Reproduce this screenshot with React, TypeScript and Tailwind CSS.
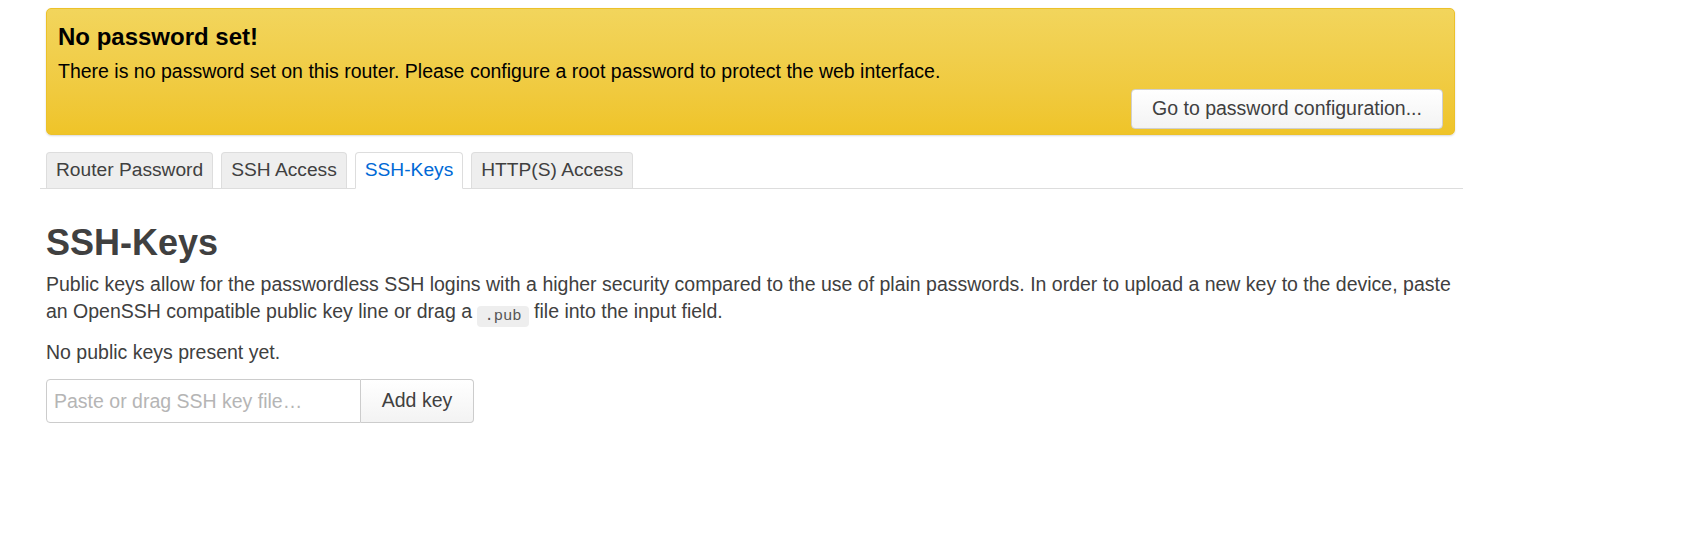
import { useState } from 'react';

const tabs = ['Router Password', 'SSH Access', 'SSH-Keys', 'HTTP(S) Access'];

export default function App() {
  const [active, setActive] = useState('SSH-Keys');
  const [key, setKey] = useState('');

  return (
    <div className="min-h-screen bg-white pt-[8px] pl-[40px] font-['Liberation_Sans',Arial,sans-serif] text-[#404040]">
      <div className="w-[1423px]">
        <div className="ml-[6px] flex h-[127px] w-[1409px] flex-col rounded-[5px] border border-[#ecc12a] bg-gradient-to-b from-[#f2d55c] to-[#efc428] px-[11px] pt-[14px] pb-[5px] text-black shadow-[0_1px_2px_rgba(0,0,0,0.15)]">
          <h4 className="text-[24px] leading-[28px] font-bold">No password set!</h4>
          <p className="mt-[7px] text-[19.5px] leading-[27px]">
            There is no password set on this router. Please configure a root password to protect the web interface.
          </p>
          <div className="mt-auto flex justify-end">
            <button className="h-[40px] w-[312px] rounded-[4px] border border-[#cfcfcf] bg-gradient-to-b from-white to-[#f3f3f3] text-[19.5px] text-[#404040]">
              Go to password configuration...
            </button>
          </div>
        </div>

        <ul className="mt-[17px] flex gap-[8px] border-b border-[#dddddd] pl-[6px]">
          {tabs.map((t) => (
            <li
              key={t}
              onClick={() => setActive(t)}
              className={
                t === active
                  ? 'mb-[-1px] flex h-[37px] cursor-pointer items-center rounded-t-[4px] border border-b-white border-[#dddddd] bg-white px-[9px] text-[19.2px] text-[#0069d6]'
                  : 'flex h-[36px] cursor-pointer items-center rounded-t-[4px] border border-b-0 border-[#dddddd] bg-[#eeeeee] px-[9px] text-[19.2px] text-[#404040]'
              }
            >
              {t}
            </li>
          ))}
        </ul>

        <div className="pl-[6px] pt-[34px]">
          <h2 className="text-[36px] leading-[40px] font-bold">SSH-Keys</h2>
          <p className="mt-[8px] w-[1410px] text-[19.5px] leading-[27px]">
            Public keys allow for the passwordless SSH logins with a higher security compared to the use of plain
            passwords. In order to upload a new key to the device, paste an OpenSSH compatible public key line or drag a{' '}
            <code className="inline-block rounded-[4px] bg-[#eeeeee] px-[7px] align-[-2px] font-['Liberation_Mono','Courier_New',monospace] text-[15.5px] leading-[21px] text-[#555555]">
              .pub
            </code>{' '}
            file into the input field.
          </p>
          <p className="mt-[12px] text-[19.5px] leading-[27px]">No public keys present yet.</p>
          <div className="mt-[13px] flex">
            <input
              value={key}
              onChange={(e) => setKey(e.target.value)}
              placeholder="Paste or drag SSH key file…"
              className="h-[44px] w-[315px] rounded-l-[4px] border border-[#cccccc] px-[7px] text-[19.5px] text-[#404040] outline-none placeholder:text-[#b5b5b5]"
            />
            <button className="h-[44px] w-[113px] rounded-r-[4px] border border-l-0 border-[#cccccc] bg-gradient-to-b from-white to-[#f3f3f3] text-[19.5px] text-[#404040]">
              Add key
            </button>
          </div>
        </div>
      </div>
    </div>
  );
}
